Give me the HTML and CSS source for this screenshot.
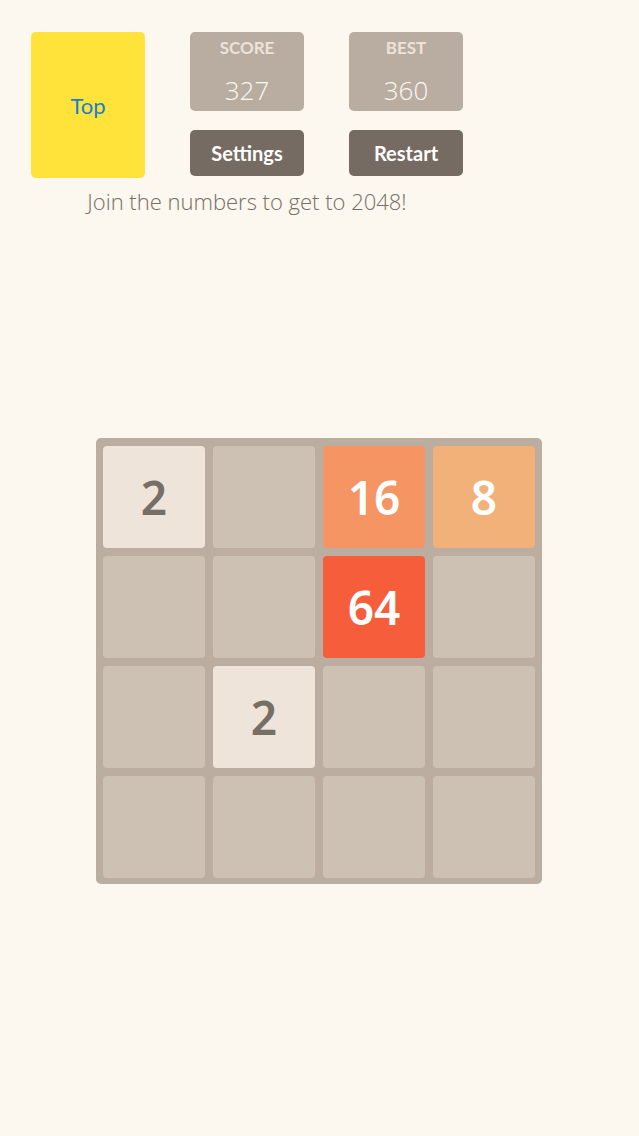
FILE: index.html
```html
<!DOCTYPE html>
<html lang="en">
<head>
    <meta charset="UTF-8">
    <meta name="viewport" content="width=device-width, initial-scale=1.0">
    <title>2048</title>
    <link rel="stylesheet" href="styles.css">
</head>
<body>
    <div class="header">
        <div class="top-row">
            <div class="top-box">Top</div>
            <div class="column">
                <div class="score-box">
                    <div class="score-label">SCORE</div>
                    <div class="score-value">327</div>
                </div>
                <button class="btn">Settings</button>
            </div>
            <div class="column">
                <div class="score-box">
                    <div class="score-label">BEST</div>
                    <div class="score-value">360</div>
                </div>
                <button class="btn">Restart</button>
            </div>
        </div>
        <p class="tagline">Join the numbers to get to 2048!</p>
    </div>

    <div class="board">
        <div class="tile tile-2">2</div>
        <div class="tile"></div>
        <div class="tile tile-16">16</div>
        <div class="tile tile-8">8</div>

        <div class="tile"></div>
        <div class="tile"></div>
        <div class="tile tile-64">64</div>
        <div class="tile"></div>

        <div class="tile"></div>
        <div class="tile tile-2">2</div>
        <div class="tile"></div>
        <div class="tile"></div>

        <div class="tile"></div>
        <div class="tile"></div>
        <div class="tile"></div>
        <div class="tile"></div>
    </div>
</body>
</html>
```

FILE: styles.css
```css
body {
    font-family: 'Lato', 'Noto Sans', sans-serif;
    background-color: #fcf7ef;
    margin: 0;
    padding: 32px 0 0 0;
    color: #776e65;
    min-height: 1104px;
}
.header {
    width: 432px;
    margin-left: 31px;
}
.top-row {
    display: flex;
    gap: 45px;
}
.top-box {
    width: 114px;
    height: 146px;
    background-color: #ffe33b;
    border-radius: 5px;
    display: flex;
    justify-content: center;
    align-items: center;
    color: #1b7fd1;
    font-size: 22px;
}
.column {
    width: 114px;
    display: flex;
    flex-direction: column;
    gap: 19px;
}
.score-box {
    height: 79px;
    background-color: #b9ada1;
    border-radius: 5px;
    text-align: center;
    box-sizing: border-box;
    padding-top: 5px;
}
.score-label {
    color: #ece3d9;
    font-size: 17px;
    font-weight: bold;
    line-height: 22px;
}
.score-value {
    color: #fbf7f2;
    font-family: 'Open Sans', 'Lato', sans-serif;
    font-size: 26px;
    font-weight: 300;
    margin-top: 16px;
    line-height: 30px;
}
.btn {
    height: 46px;
    background-color: #756b63;
    border: none;
    border-radius: 5px;
    color: #fff;
    font-family: 'Lato', 'Noto Sans', sans-serif;
    font-size: 20px;
    font-weight: bold;
    padding: 0;
}
.tagline {
    margin: 10px 0 0 0;
    text-align: center;
    font-family: 'Open Sans', 'Lato', sans-serif;
    font-size: 22px;
    font-weight: 300;
    color: #776e65;
    line-height: 26px;
}
.board {
    width: 446px;
    box-sizing: border-box;
    margin: 224px 0 0 96px;
    padding: 8px 7px 6px;
    background-color: #bbada0;
    border-radius: 5px;
    display: grid;
    grid-template-columns: repeat(4, 102px);
    grid-auto-rows: 102px;
    gap: 8px;
}
.tile {
    background-color: #cdc1b4;
    border-radius: 4px;
    display: flex;
    justify-content: center;
    align-items: center;
    font-family: 'Noto Sans', 'Lato', sans-serif;
    font-size: 46px;
    font-weight: 600;
    color: #fff;
}
.tile-2 {
    background-color: #eee4da;
    color: #776e65;
}
.tile-8 {
    background-color: #f2b179;
}
.tile-16 {
    background-color: #f59563;
}
.tile-64 {
    background-color: #f65e3b;
}
```
